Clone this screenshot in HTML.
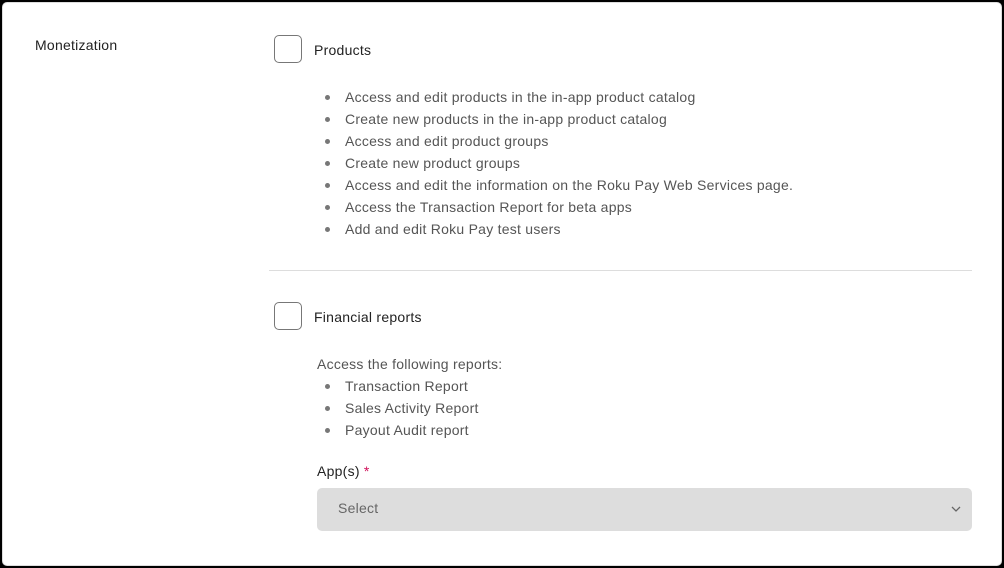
<!DOCTYPE html>
<html><head><style>
html,body{margin:0;padding:0;width:1004px;height:568px;background:#000;overflow:hidden}
.card{position:absolute;left:2px;top:2px;width:998px;height:562px;background:#fff;border:1px solid #ddd;border-radius:5px;font-family:"Liberation Sans",sans-serif;letter-spacing:0.25px}
.t{position:absolute;font-size:14px;color:#222;white-space:nowrap}
.cb{position:absolute;width:28px;height:28px;border:1px solid #777;border-radius:5px;box-sizing:border-box}
ul{position:absolute;margin:0;padding:0 0 0 28px;list-style:none;font-size:14px;color:#555;line-height:22px}
ul li{position:relative;white-space:nowrap}
ul li:before{content:"";position:absolute;left:-20px;top:9px;width:5px;height:5px;border-radius:50%;background:#777}
</style></head><body>
<div class="card">
<div class="t" style="left:32px;top:34px">Monetization</div>
<div class="cb" style="left:271px;top:32px"></div>
<div class="t" style="left:311px;top:39px">Products</div>
<ul style="left:314px;top:83px">
<li>Access and edit products in the in-app product catalog</li>
<li>Create new products in the in-app product catalog</li>
<li>Access and edit product groups</li>
<li>Create new product groups</li>
<li>Access and edit the information on the Roku Pay Web Services page.</li>
<li>Access the Transaction Report for beta apps</li>
<li>Add and edit Roku Pay test users</li>
</ul>
<div style="position:absolute;left:266px;top:267px;width:703px;height:1px;background:#ddd"></div>
<div class="cb" style="left:271px;top:299px"></div>
<div class="t" style="left:311px;top:306px">Financial reports</div>
<div class="t" style="left:314px;top:353px;color:#555">Access the following reports:</div>
<ul style="left:314px;top:372px">
<li>Transaction Report</li>
<li>Sales Activity Report</li>
<li>Payout Audit report</li>
</ul>
<div class="t" style="left:314px;top:460px">App(s) <span style="color:#d0105a">*</span></div>
<div style="position:absolute;left:314px;top:485px;width:655px;height:43px;background:#ddd;border-radius:5px">
<div class="t" style="left:21px;top:12px;color:#666">Select</div>
<svg style="position:absolute;right:11px;top:18px" width="10" height="7" viewBox="0 0 10 7"><path d="M1 1l4 4 4-4" fill="none" stroke="#666" stroke-width="1.3"/></svg>
</div>
</div>
</body></html>
